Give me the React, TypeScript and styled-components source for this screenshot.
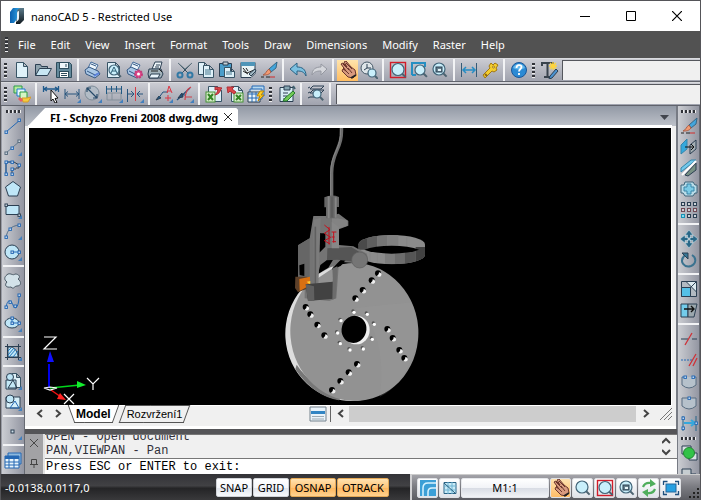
import React from "react";
import styled, { createGlobalStyle, css } from "styled-components";

const GlobalStyle = createGlobalStyle`
  * { box-sizing: border-box; }
  html, body, #root { margin: 0; padding: 0; }
  body { background: #3a3a3c; font-family: "Noto Sans", "Open Sans", sans-serif; font-size: 11px; color: #000; }
  button, input { font: inherit; color: inherit; margin: 0; padding: 0; border: 0; border-radius: 0; background: none; }
  svg { display: block; }
`;

const K = "#2b3f52";
const B = "#2468b4";
const L = "#bfe6f7";
const C = "#35a8dc";

const ln = (d: string, stroke = K, w = 1) => <path d={d} stroke={stroke} strokeWidth={w} fill="none" />;
const fl = (d: string, fill: string, stroke = K, w = 1) => <path d={d} stroke={stroke} strokeWidth={w} fill={fill} />;
const sq = (x: number, y: number, c = B) => <rect key={`${x}-${y}`} x={x - 1} y={y - 1} width="2.4" height="2.4" fill="#e4edf5" stroke={c} strokeWidth="1" />;
const corner = <path d="M18 14v4h-4z" fill="#4380bd" />;
const lens = (x: number, y: number, r: number, c = "#c9effb") => (
  <>
    <path d={`M${x + r * 0.7} ${y + r * 0.7}l3.4 3.4`} stroke="#4d6370" strokeWidth="2" />
    <circle cx={x} cy={y} r={r} fill={c} stroke="#426579" strokeWidth="1.2" />
  </>
);
const page = (x: number, y: number, w: number, h: number) =>
  fl(`M${x} ${y}h${w - 4}l4 4v${h - 4}h${-w}zM${x + w - 4} ${y}v4h4`, "#dff1f9", "#385466");
const printer = (
  <>
    {fl("M4 7l3-6l7 3l-3 6z", "#eef6fc", "#426a9a")}
    {fl("M1 9l4-3l9 4l2 3l-5 4l-9-4z", "#aac8e6", "#345782")}
    {ln("M3 10l8 4l4-2M7 3l5 2", "#345782")}
  </>
);
const hand = (
  <>
    {fl("M2 3l2-1l4 4l-3-5l2-1l5 6l4 3l1 5l-3 3l-5-1l-6-6l1-2l3 2z", "#d89a7f", "#6b352b")}
    {ln("M4 3l6 6M7 2l6 6M4 7l6 6M9 7l4 5", "#6b352b")}
    {ln("M12 17l5-3", "#222", 2)}
  </>
);
const brush = (
  <>
    {fl("M17 1l-1 6l-5 4l-2-3z", "#43a6dd", "#356785")}
    {fl("M9 8l2 3c-2 3-5 3-8 3c3-1 3-4 6-6z", "#f29a72", "#a95e48")}
    {ln("M1 16h3M6 16h4", "#222", 1)}
    {ln("M10 16h5", "#d12d2d", 1)}
  </>
);
const dimH = ln("M2 4v10M16 4v10M2 9h14M5 6.500l-3 2.500l3 2.500M13 6.500l3 2.500l-3 2.500", "#28557d");

const drawings: Record<string, React.ReactNode> = {
  New: page(3.5, 1.5, 11, 15),
  Open: <>{fl("M1.500 14.500v-11h5l1 2h6v3", "#8fa3ae")}{fl("M1.500 14.500l4-7h12l-4 7z", "#c8e6f3")}</>,
  Save: <>{fl("M1.500 1.500h13l2 2v13h-15z", "#63899b", "#2d4c5c")}<rect x="4.500" y="1.500" width="9" height="6" fill="#eef6fa" stroke="#2d4c5c" /><rect x="4.500" y="10.500" width="9" height="6" fill="#fff" stroke="#2d4c5c" />{ln("M6 12.500h6M6 14.500h6M11 3v3", "#2d4c5c")}</>,
  Print: <>{printer}{ln("M10 15l5-3", "#5d83df", 2)}</>,
  Preview: <>{page(2.5, 1.5, 12, 15)}{lens(9, 9, 5)}{ln("M6 12l3-6l3 6M7 10h4", "#2f6076")}</>,
  Plot: <>{printer}<circle cx="12.500" cy="13" r="3.500" fill="#e24a8c" stroke="#c33b78" strokeDasharray="2 1" strokeWidth="2" /><circle cx="12.500" cy="13" r="1.500" fill="#fff" /></>,
  Printer: <>{fl("M5 8l3-7h7l-2 7z", "#eef6fa")}{fl("M2 8h12l2 5l-2 4h-12l-1-4z", "#a4b4bc")}{fl("M4 13h9l-2 4h-9z", "#e9f4fb")}{ln("M9 4h4M8 6h4")}{ln("M12 8l3 3M4 10h7", "#222")}</>,
  Cut: <>{ln("M2 2l11 11M16 2l-11 11", "#344f60", 1)}{ln("M2 2l7 6l7-6", "#687b85", 1)}<circle cx="4" cy="14" r="2.500" fill="none" stroke="#3279a5" strokeWidth="2" /><circle cx="14" cy="14" r="2.500" fill="none" stroke="#3279a5" strokeWidth="2" /></>,
  Copy: <>{page(1.5, 1.5, 10, 12)}{page(6.5, 4.5, 10, 12)}{ln("M8 9h6M8 11h6M8 13h6", "#48788e")}</>,
  Paste: <>{fl("M1.500 2.500h12v13h-12z", "#4a9ecb")}{fl("M5 1h5v3h-5z", "#c6d1d6")}{page(6.5, 6.5, 10, 10)}{ln("M8 11h6M8 13h6", "#48788e")}</>,
  Properties: <>{fl("M2 1.500h14v11l-4 4h-10z", "#e9f3f5")}<path d="M2 1h14v4h-14z" fill="#4f95b8" />{ln("M4 7l4 5l7-3M4 10l5 3M7 7l2 3", "#222")}{fl("M10 13l6-5l1 2l-5 5z", "#a3b9c4")}</>,
  "Match properties": brush,
  Undo: fl("M1 8l7-6v4c5 0 9 2 9 9c-2-4-4-5-9-5v4z", "#7bc0e0", "#2b6385"),
  Redo: fl("M17 8l-6-5v3c-5 0-9 2-9 8c2-3 4-4 9-4v4z", "#d4d6db", "#9598a1"),
  Pan: hand,
  "Zoom realtime": <><circle cx="7" cy="7" r="6" fill="#dee5e9" stroke="#465967" />{ln("M7 3v4h4M7 7l-3 2")}{lens(12, 12, 4)}</>,
  "Zoom all": <><rect x="1.500" y="1.500" width="15" height="15" fill="none" stroke="#d11d2a" strokeWidth="1.400" />{lens(9, 8.5, 6)}</>,
  "Zoom window": <>{ln("M2 14v-12h13v4M2 14h4", "#258fc2", 2)}{lens(10, 9, 5)}</>,
  "Zoom previous": <>{lens(8, 8, 6)}<rect x="5" y="6" width="6" height="5" fill="#66818e" stroke={K} /><path d="M7 8h3v2h-3z" fill="#e8f5fa" /></>,
  Measure: <>{ln("M1.500 2v14M16.500 2v14", "#345b78")}{ln("M3 9h12M6 6l-3 3l3 3M12 6l3 3l-3 3", "#268dc5", 1.5)}</>,
  Key: <>{fl("M2 14l7-7l-1-2l2-3l2 2l2-2l3 2l-2 3l1 2l-3 2l-2-1l-7 7z", "#f3cd2e", "#a27813")}<circle cx="12.500" cy="6" r="1" fill="#fff8bc" stroke="#a27813" />{ln("M4 13l2 2", "#8d6716", 2)}</>,
  Help: <><circle cx="9" cy="9" r="7.500" fill="#2b8ad4" stroke="#195799" /><path d="M3 7a6.500 6.500 0 0 1 12 0c-4 2-8 2-12 0z" fill="#65b9ec" />{ln("M6.500 7c0-4 5-3.500 5-1c0 2-2.500 2-2.500 4.500M9 12v2", "#fff", 1.8)}</>,
  "Text style": <>{ln("M1 5v-3h11v3M6.500 2v14M3 16h7", "#39434d", 2)}{ln("M12 1v8M8 5h8M9 2l6 6M15 2l-6 6", "#ffd53b", 1.4)}{fl("M15 8l2 2l-6 7l-3 1l1-3z", "#4b92d1")}</>,
  Layers: <>{fl("M1 1h8v7h-8z", "#b7ec9a", "#2c9a4a")}{fl("M4 4h8v7h-8z", "#e9f7ff", "#207ad0")}{fl("M7 7h7v7h-7z", "#d5f5c4", "#2e9c3d")}{fl("M9 13h5l4-1l-3 5h-5z", "#f4cc3c", "#d79a2a")}<path d="M5 14l2-2l3 3l-2 2z" fill="#e95d62" /></>,
  "Quick dimension": <>{ln("M1.500 1v6M16.500 1v6M1.500 4h15M5 2l-3 2l3 2M13 2l3 2l-3 2", "#205b8d", 1.3)}{fl("M9 5l7 8l-3 .5l2 4l-2 .5l-2-4l-2 2z", "#fff", "#111")}</>,
  "Linear dimension": <>{dimH}{corner}</>,
  Diameter: <><circle cx="8" cy="8" r="7" fill="#b2bcc6" stroke="#7d8b97" />{ln("M3 3l10 10M3 7V3h4M9 13h4v-4", "#254969", 1.2)}{corner}</>,
  "Chain dimensions": <>{ln("M2 8h14v7h-14zM7 8v7", "#84909b")}{ln("M1.500 1v8M6.500 1v6M11.500 1v6M16.500 1v8M1.500 4h15", "#205983", 1)}{corner}</>,
  "Dimension break": <>{ln("M1.500 4v13M1.500 9h6M17 9h-6M5 6l3 3l-3 3M14 6l-3 3l3 3", "#26547d")}{ln("M9.500 2v14", "#d43e48")}{corner}</>,
  Leader: <>{fl("M1 15l3-4l2 2z", "#29567d")}{ln("M3 14l5-7h5", "#24527c")}{ln("M12 8l2-7l3 7M13 6h3M13 10v6M10 13h6", "#db3644")}{corner}</>,
  "Multi leader": <>{ln("M1 15l13-12M4 10h5", "#24527c", 1.2)}{ln("M9 15c0-7 2-11 6-13M9 12h7", "#d1404b", 1.2)}{fl("M2 13l4-5l1 4z", "#24527c")}{corner}</>,
  "Import table": <>{page(3.5, 1.5, 13, 15)}<rect x="1" y="7" width="9" height="10" fill="#d7eccb" stroke="#479237" />{ln("M3 9l5 6M8 9l-5 6", "#328624", 2)}{fl("M17 3l-7-1v3l3-1c0 3-2 4-3 6c4-1 5-3 6-6z", "#db4649", "#ae3038")}</>,
  "Export table": <>{page(5.5, 1.5, 11, 15)}<rect x="8" y="8" width="9" height="9" fill="#d7eccb" stroke="#479237" />{ln("M10 10l5 5M15 10l-5 5", "#328624", 2)}{fl("M1 2h7l-2 2l4 3l-2 2l-4-3l-2 2z", "#db4649", "#ae3038")}</>,
  "Update table": <>{fl("M5 1h12v10h-12z", "#b6d8ef", B)}{fl("M3 4h12v10h-12z", "#cfdfeb", B)}{fl("M1 7h12v10h-12z", "#eaf5fa")}{ln("M1 9h12M1 13h12M5 7v10M9 7v10", B)}{fl("M13 6h4l-3 4h3l-6 6l2-5h-3z", "#ffcf24", "#b88408")}</>,
  Audit: <>{fl("M2 2.500h13v14h-13z", "#d8eef4")}{fl("M6 1h6v4h-6z", "#87a7b3")}{ln("M5 8h5M5 11h4M5 14h3")}{fl("M7 13l8-7l2 2l-8 8h-4z", "#71c956", "#267a2e")}{ln("M15 1l2 3", "#3f5f6d", 2)}</>,
  "Find layer": <>{ln("M3 4l3-3h11l-3 3zM3 8l3-3h11l-3 3zM3 12h11M1 3l2-1M1 8l2-1M1 13l2-1", K)}{lens(10, 9, 4)}</>,
  Line: <>{ln("M2 15L16 3", B)}{sq(2, 15)}{sq(15, 3)}</>,
  Ray: <>{ln("M2 15L16 3", "#657d91")}{sq(2, 15, "#526779")}{sq(8, 10)}{sq(15, 3, "#526779")}{corner}</>,
  Polyline: <>{ln("M2 15V3h8M8 15v-5h4M10 3l5 3v3h-3", K)}{ln("M2 15V3h6", B, 1)}{sq(2, 3)}{sq(2, 15)}{sq(8, 3)}{sq(8, 15)}{sq(8, 10)}{sq(15, 6)}</>,
  Polygon: fl("M9 1.500l7.500 5.500l-3 9h-9l-3-9z", L),
  Rectangle: <>{fl("M2 4.500h13v9h-13z", L)}{sq(2, 4, K)}{sq(15, 14, K)}{corner}</>,
  Arc: <>{ln("M2 16C3 8 7 4 15 3", "#55708b")}{sq(2, 15)}{sq(6, 7)}{sq(15, 3)}{corner}</>,
  Circle: <><circle cx="8" cy="9" r="7" fill={L} stroke={K} />{ln("M8 9h8", B)}{sq(8, 9)}{sq(15, 9)}{corner}</>,
  "Revision cloud": fl("M4 2c3-1 5 2 7 0c4 0 6 3 3 5c4 3 3 7-1 7c-3 0-3 4-6 1c-5 1-7-2-4-5c-4-3-2-6 1-8z", "#d3e2e9", "#4b5a66"),
  Spline: <>{ln("M2 15c1-9 5-9 7-3s6 2 6-9", B)}{sq(2, 14)}{sq(6, 9)}{sq(11, 13)}{sq(15, 2)}</>,
  Ellipse: <><ellipse cx="8" cy="9" rx="7" ry="5" fill={L} stroke={K} />{ln("M8 4v5h7", B)}{sq(8, 4)}{sq(8, 9)}{sq(15, 9)}{corner}</>,
  Hatch: <>{ln("M1 3.500h16M3.500 1v16M14.500 1v16M1 14.500h16")}{fl("M4 14v-10h3c4 1 7 5 7 10z", L)}{ln("M4 8l3-3M4 12l6-7M5 14l7-8M9 14l5-6", "#2478bd")}{corner}</>,
  "Make block": <>{page(7.5, 1.5, 9, 14)}{fl("M2 8h10v9h-10z", "#c3e8f6")}<circle cx="6" cy="5" r="3.500" fill={L} stroke={K} />{ln("M4 16l5-8l4 8z")}{corner}</>,
  "Insert block": <>{fl("M2 4h14v11h-14z", "#d6eff9")}<circle cx="6" cy="6" r="4" fill={L} stroke={K} />{ln("M6 15l5-7l4 7z", B)}{corner}</>,
  Point: <><rect x="7" y="8" width="3" height="3" fill="#cfe0ea" stroke={K} />{corner}</>,
  Table: <>{fl("M4 2h13v11h-13z", "#8bb8de", B)}{fl("M1 5h14v12h-14z", "#eaf6fc", B)}<path d="M1 5h14v3h-14z" fill={B} />{ln("M1 11h14M1 14h14M5 8v9M10 8v9", B)}</>,
  Erase: brush,
  Mirror: <>{fl("M1 7l6-6v10l-6 5z", C, "#3585ab")}{fl("M16 2l-6 5v9l6-5z", "#a4aeb3")}{ln("M5 9h9M11 6l3 3l-3 3", "#111")}</>,
  Offset: <>{fl("M1 13V9l10-8h5z", "#73c9eb", "#3585ab")}{fl("M5 16l11-12v7l-8 6z", "#779083")}{ln("M2 16L16 2", "#fff", 2)}</>,
  Outline: <>{fl("M1 5h3l1-3h8l2 3h2v8h-2l-2 3H5l-2-3H1z", "#b9dce8", "#3e657a")}{fl("M4 7h3V4h4v3h3v4h-3v3H7v-3H4z", "#7ccbe6", "#3a86a8")}</>,
  Array: <>{[2, 8, 14].map(y => [2, 8, 14].map(x => <rect key={`${x}-${y}`} x={x - 0.5} y={y - 0.5} width="3" height="3" fill={x === 2 && y === 14 ? "#86dcef" : "#cdd2d7"} stroke={x === 2 && y === 14 ? "#1992b5" : y === 8 ? "#714a55" : K} />))}</>,
  Move: <path d="M9 0l4 5h-2.500v3h-3v-3H5zM9 18l4-5h-2.500v-3h-3v3H5zM0 9l5-4v2.500h3v3H5V13zM18 9l-5-4v2.500h-3v3h3V13z" fill="#286787" stroke="#c8e5ef" strokeWidth=".5" />,
  Rotate: <>{ln("M5 4c-7 7 0 13 6 11c5-2 6-8 1-11", "#3a728f", 2)}{fl("M2 2h6v6z", "#387796")}</>,
  Scale: <>{fl("M1.500 1.500h15v15h-15z", "#b2bac2")}{fl("M6 1.500h10.500V12z", "#dceaf0")}{fl("M1.500 7.500h9v9h-9z", "#54c0e7")}{ln("M10 8l6-6")}</>,
  Stretch: <>{fl("M1 3h7v13H1z", "#73cceb")}{fl("M8 3h9l-3 13H8z", "#9ba7ad")}{ln("M4 8h10M11 5l3 3l-3 3", "#111", 1.4)}</>,
  Trim: <>{ln("M1 9h7M12 9h5")}{ln("M5 15l7-12", "#cf3137", 1.3)}</>,
  Extend: <><path d="M1 9h12" stroke={B} strokeDasharray="2 1" />{ln("M9 15l7-12M13 15l4-8", "#cf3137", 1.3)}</>,
  Join: <>{fl("M2 5v8q7 6 14 0V5", "#b6c1cb", "#586d81")}{ln("M2 5h4M12 5h4", B)}{sq(5, 5)}{sq(13, 5)}</>,
  "Break at point": <>{fl("M2 5v8q7 6 14 0V5z", "#b6c1cb", "#586d81")}{sq(9, 5)}</>,
  Align: <>{ln("M3 2v15M16 2v15", "#27658a")}{ln("M4 9h10M11 6l4 3l-4 3", C, 2)}{sq(3, 4)}{sq(3, 14)}{sq(16, 9)}</>,
  "Draw order": <>{fl("M2 2h9v8h-9z", "#d9e0e4")}{fl("M9 9h8v7h-8z", "#d9e0e4")}<circle cx="9" cy="9" r="5.500" fill="#32c348" stroke="#238533" /></>,
  "Send back": <>{fl("M2 4h9v8h-9z", "#c6cdd1")}{fl("M11 9h5v7h-9v-4", "#c6cdd1")}</>,
  "Model space": <><path d="M1 1h16v16H1z" fill="#3c9fd6" />{ln("M4 17V9q0-5 5-5h8M9 17v-4q0-4 4-4h4", "#d8f4ff", 1.5)}</>,
  "Grid display": <>{fl("M3 3.500h12v11H3z", "#c9ebf7", "#2a6385")}{ln("M3 7h12M3 11h12M7 3v12M11 3v12", "#6fb3d2")}{ln("M3 4l11 10", "#245d7d", 1)}</>,
  "Zoom in": lens(8, 8, 6),
  Regenerate: <>{ln("M3 8q2-5 8-4M15 10q-2 5-8 4", "#4fae5c", 2.2)}<path d="M10 0l6 5l-6 3zM8 18l-6-5l6-3z" fill="#4fae5c" /></>,
  "Full screen": <><rect x="4" y="5" width="10" height="8" fill="#27a0e1" stroke="#23669b" />{ln("M1.500 6V2.500h4M13 2.500h3.500V6M16.500 12v3.500H13M5 15.500H1.500V12", "#1e4f7d", 1.3)}</>,
};

const IconButton = styled.button<{ $on?: boolean }>`
  flex: none;
  display: grid;
  place-items: center;
  width: 21px;
  height: 21px;
  ${p => p.$on && css`background: linear-gradient(#ffe4ac, #ffbd62);`}
`;
const Tool = ({ name, on }: { name: string; on?: boolean }) => (
  <IconButton type="button" aria-label={name} $on={on}>
    <svg width="18" height="18" viewBox="0 0 18 18" aria-hidden="true">{drawings[name]}</svg>
  </IconButton>
);

const Window = styled.div`
  min-height: 100vh;
  display: flex;
  flex-direction: column;
  border: 1px solid #555559;
  border-bottom: 0;
  background: #777b84;
`;
const TitleBar = styled.header`
  display: flex;
  align-items: center;
  height: 30px;
  padding-left: 8px;
  background: #fff;
  h1 { flex: 1; margin: 0 0 0 6px; font: 11px "Noto Sans", sans-serif; }
`;
const CaptionButton = styled.button`
  width: 46px;
  height: 30px;
  display: grid;
  place-items: center;
`;
const MenuBar = styled.nav`
  display: flex;
  align-items: center;
  height: 27px;
  gap: 15px;
  padding-left: 4px;
  background: #525252;
  color: #fff;
`;
const Grip = styled.span<{ $flat?: boolean }>`
  flex: none;
  align-self: center;
  width: ${p => (p.$flat ? "15px" : "3px")};
  height: ${p => (p.$flat ? "3px" : "15px")};
  margin: ${p => (p.$flat ? "4px 0 2px" : "0 4px 0 3px")};
  background: repeating-linear-gradient(${p => (p.$flat ? "90deg" : "180deg")}, #303238 0 2px, #eee 2px 3px, transparent 3px 4px);
`;
const MenuGrip = styled(Grip)` margin: 0 -5px 0 0; `;
const ToolRow = styled.div`
  display: flex;
  align-items: center;
  height: 24px;
  border-top: 1px solid #d9dade;
  border-bottom: 1px solid #60636c;
  background: linear-gradient(#cbccd3, #a0a3ae);
`;
const Divider = styled.span<{ $flat?: boolean }>`
  flex: none;
  width: ${p => (p.$flat ? "21px" : "2px")};
  height: ${p => (p.$flat ? "2px" : "22px")};
  margin: ${p => (p.$flat ? "3px 0" : "0 3px")};
  background: #f2f3f5;
`;
const Field = styled.input`
  flex: 1;
  min-width: 0;
  height: 20px;
  margin-left: 2px;
  border-top: 1px solid #55575d;
  border-left: 1px solid #55575d;
  background: #f0f0f0;
  outline: 0;
`;
const Body = styled.main`
  flex: 1;
  min-height: 368px;
  display: flex;
  background: #777b84;
`;
const SideBar = styled.aside<{ $right?: boolean }>`
  flex: none;
  width: ${p => (p.$right ? "23px" : "24px")};
  display: flex;
  flex-direction: column;
  align-items: center;
  height: 368px;
  overflow: hidden;
  background: linear-gradient(90deg, #cbcdd2, #9396a2);
  border-right: 1px solid #666a73;
  border-left: 1px solid ${p => (p.$right ? "#777b84" : "#999ca5")};
`;
const Workspace = styled.section`
  flex: 1;
  min-width: 0;
  display: flex;
  flex-direction: column;
`;
const DocumentPane = styled.div`
  flex: 1;
  display: flex;
  flex-direction: column;
  background: #f0f0f0;
  margin-right: 1px;
`;
const DocumentTabs = styled.div`
  display: flex;
  justify-content: space-between;
  align-items: flex-end;
  height: 20px;
  padding-left: 3px;
  background: linear-gradient(#9299a5, #bdc1c9);
`;
const DocumentTab = styled.div`
  display: flex;
  align-items: center;
  gap: 4px;
  height: 18px;
  padding: 0 4px 0 22px;
  background: #fff;
  clip-path: polygon(17px 0, calc(100% - 2px) 0, 100% 2px, 100% 100%, 0 100%);
  font-weight: 700;
  white-space: nowrap;
`;
const GlyphButton = styled.button<{ $w?: number }>`
  flex: none;
  display: grid;
  place-items: center;
  width: ${p => p.$w ?? 12}px;
  height: 18px;
`;
const Viewport = styled.div`
  flex: 1;
  display: grid;
  margin: 0 5px 0 4px;
  border-top: 2px solid #fff;
  background: #000;
  outline: 1px solid #fff;
  overflow: hidden;
  > svg { grid-area: 1 / 1; }
`;
const Scene = styled.svg` width: 100%; height: 100%; min-height: 277px; `;
const Axes = styled.svg` align-self: end; justify-self: start; `;
const LayoutBar = styled.div`
  position: relative;
  display: flex;
  align-items: center;
  height: 24px;
  padding: 0 4px 4px 6px;
  border-bottom: 3px solid #fff;
`;
const LayoutTab = styled.button<{ $active?: boolean }>`
  position: relative;
  isolation: isolate;
  height: 18px;
  padding: 0 9px;
  margin-right: -2px;
  font: ${p => (p.$active ? "700 12px" : "11px")} "Liberation Sans", sans-serif;
  &::before, &::after {
    content: "";
    position: absolute;
    z-index: -1;
    inset: 0 50% 0 4px;
    border: solid #555;
    border-width: ${p => (p.$active ? "0 0 1px 1px" : "1px 0 1px 1px")};
    background: ${p => (p.$active ? "#fff" : "#f0f0f0")};
    transform: skewX(${p => (p.$active ? "20deg" : "-20deg")});
  }
  &::after {
    inset: 0 4px 0 40%;
    border-width: ${p => (p.$active ? "0 1px 1px 0" : "1px 1px 1px 0")};
    transform: skewX(-20deg);
  }
`;
const Spacer = styled.span` flex: 1; `;
const ScrollTrack = styled.div`
  flex: 0 1 287px;
  height: 16px;
  background: #cdcdcd;
`;
const ScrollArea = styled.div`
  flex: 0 1 341px;
  min-width: 0;
  display: flex;
  align-items: center;
  gap: 1px;
  padding-left: 3px;
`;
const CommandPanel = styled.section`
  display: grid;
  grid-template-columns: 18px 1fr;
  height: 45px;
  border-top: 5px solid #555558;
  background: #a2a2a5;
  font: 12px/14px "Liberation Mono", monospace;
`;
const CommandControls = styled.div`
  display: flex;
  flex-direction: column;
  align-items: center;
  gap: 2px;
`;
const CommandText = styled.div`
  min-width: 0;
  display: flex;
  flex-direction: column;
  background: #f0f0f0;
  border-left: 2px solid #e3e3e3;
`;
const History = styled.div`
  display: flex;
  justify-content: space-between;
  height: 24px;
  overflow: hidden;
  border-top: 1px solid #777;
`;
const Log = styled.div`
  display: flex;
  flex-direction: column;
  justify-content: flex-end;
  padding-left: 1px;
  color: #30303a;
`;
const ScrollStack = styled.div`
  display: flex;
  flex-direction: column;
  justify-content: center;
  gap: 2px;
  padding-right: 6px;
`;
const CommandInput = styled.input`
  width: 100%;
  height: 16px;
  padding-left: 1px;
  border-top: 1px solid #777;
  background: #fff;
  outline: 0;
`;
const StatusBar = styled.footer`
  display: flex;
  align-items: center;
  height: 26px;
  background: linear-gradient(#333337, #414144 45%, #242426 55%, #39393b);
`;
const Coordinates = styled.output`
  flex: 0 1 215px;
  padding-left: 4px;
  color: #fff;
`;
const Modes = styled.div`
  display: flex;
  gap: 1px;
`;
const ModeButton = styled.button<{ $on?: boolean; $w: number }>`
  width: ${p => p.$w}px;
  height: 19px;
  border: 1px solid ${p => (p.$on ? "#e4a855" : "#d0d3d8")};
  border-radius: 2px;
  background: ${p => (p.$on ? "linear-gradient(#ffe2b0, #ffc579 50%, #ffb55b 51%, #ffd390)" : "linear-gradient(#fff, #f5f7fb 50%, #dfe4ec 51%, #f7f9fc)")};
`;
const StatusTray = styled.div`
  flex: 0 0 290px;
  display: flex;
  align-items: center;
  gap: 1px;
  height: 26px;
  padding-left: 5px;
  margin-left: auto;
  border-left: 2px solid #d1d1d3;
  border-top: 1px solid #ccc;
  background: linear-gradient(#a4a4aa, #7c7d83 45%, #5b5c62);
  ${IconButton} {
    height: 20px;
    border: 1px solid #dfe1e5;
    border-radius: 2px;
    background: linear-gradient(#fff, #dfe3e9);
  }
  ${IconButton}:nth-of-type(4) { background: linear-gradient(#ffe2b0, #ffbd67); }
`;
const ScaleButton = styled.button`
  flex: 1;
  height: 20px;
  border: 1px solid #e5e7eb;
  border-radius: 2px;
  background: linear-gradient(#fff, #f1f3f7 50%, #d8dce4 51%, #f1f3f6);
`;
const SizeGrip = styled.svg` flex: none; align-self: end; margin: 0 0 1px 6px; `;

const Chevron = ({ dir }: { dir: "left" | "right" | "up" | "down" }) => {
  const d = { left: "M6 1L2 4.500L6 8", right: "M2 1L6 4.500L2 8", up: "M0 6L4 2L8 6", down: "M0 2L4 6L8 2" }[dir];
  return <svg width="9" height="9" viewBox="0 0 9 9" aria-hidden="true">{ln(d, "#444", 2)}</svg>;
};
const Cross = ({ size = 9, color = "#222" }: { size?: number; color?: string }) => (
  <svg width={size} height={size} viewBox="0 0 10 10" aria-hidden="true">{ln("M0 0L10 10M10 0L0 10", color, 1.2)}</svg>
);

const renderTools = (items: string[], flat = false) =>
  items.map((n, i) => (n === "|" ? <Divider key={i} $flat={flat} /> : n === ":" ? <Grip key={i} $flat={flat} /> : <Tool key={i} name={n} on={n === "Pan"} />));

const menus = ["File", "Edit", "View", "Insert", "Format", "Tools", "Draw", "Dimensions", "Modify", "Raster", "Help"];
const standard = ["New", "Open", "Save", "|", "Print", "Preview", "Plot", "Printer", "|", "Cut", "Copy", "Paste", "Properties", "Match properties", "|", "Undo", "Redo", "|", "Pan", "Zoom realtime", "|", "Zoom all", "Zoom window", "Zoom previous", "|", "Measure", "Key", "|", "Help"];
const dimension = ["Layers", "|", "Quick dimension", "Linear dimension", "Diameter", "Chain dimensions", "Dimension break", "|", "Leader", "Multi leader", "|", "Import table", "Export table", "Update table"];
const drawTools = ["Line", "Ray", "Polyline", "Polygon", "Rectangle", "Arc", "Circle", "|", "Revision cloud", "Spline", "Ellipse", "|", "Hatch", "|", "Make block", "Insert block", "|", "Point", "|", "Table"];
const modifyTools = ["Erase", "Mirror", "Offset", "Outline", "Array", "|", "Move", "Rotate", "|", "Scale", "Stretch", "|", "Trim", "Extend", "Join", "Break at point", "Align", ":", "Draw order", "Send back"];

const boltHoles = [[108, 172], [122, 194], [143, 225], [164, 257], [325, 71], [306, 92], [279, 121], [257, 146], [353, 238], [369, 265], [389, 301], [404, 325], [262, 343], [237, 368], [212, 394], [187, 421]];
const hubHoles = [[251, 186], [291, 192], [312, 222], [306, 267], [279, 296], [239, 299], [210, 280], [202, 248], [212, 211]];

const BrakeModel = () => (
  <Scene viewBox="0 0 642 277" role="img" aria-label="Brake disc assembly">
    <defs><clipPath id="ring"><path d="M265 358A100 28 0 0 1 465 358V390A100 28 0 0 1 265 390Z" /></clipPath></defs>
    <g transform="translate(241 -3) scale(.333333)">
      <path d="M214 0C220 75 185 75 185 145V218" fill="none" stroke="#6c6c6c" strokeWidth="10" />
      <path d="M211 10C216 75 182 80 182 145V218" fill="none" stroke="#868686" strokeWidth="3" />
      <g clipPath="url(#ring)">
        <path d="M260 325H470V422H260Z" fill="#8b8b8b" />
        <path d="M260 325H293V374H260Z" fill="#4a4a4a" />
        <path d="M293 325H322V374H293Z" fill="#5e5e5e" />
        <path d="M322 325H352V374H322Z" fill="#757575" />
        <path d="M352 325H385V374H352Z" fill="#808080" />
        <path d="M345 380H375V422H345Z" fill="#7c7c7c" />
        <path d="M375 376H405V422H375Z" fill="#6d6d6d" />
        <path d="M405 372H437V422H405Z" fill="#555" />
        <path d="M437 366H470V422H437Z" fill="#424242" />
        <path d="M410 325V370M300 378V420M322 380V420" stroke="#7c7c7c" />
      </g>
      <path d="M283 374A100 28 0 0 1 447 374A100 28 0 0 1 283 374Z" fill="#000" />
      <g transform="translate(0 375)">
        <ellipse cx="244" cy="250" rx="198" ry="203" transform="rotate(8 244 250)" fill="#ddd" />
        <path d="M76 358Q130 438 206 451L220 440Q126 414 80 344Z" fill="#777" />
        <ellipse cx="253" cy="246" rx="192" ry="207" transform="rotate(-5 253 246)" fill="#929292" />
        <path d="M256 174Q352 242 330 440Q413 400 444 260Q450 220 425 157Z" fill="#9d9d9d" opacity=".25" />
        <ellipse cx="259" cy="240" rx="40" ry="43" fill="#eee" />
        <ellipse cx="252" cy="238" rx="37" ry="41" transform="rotate(15 252 238)" fill="#000" />
        {boltHoles.map(([x, y]) => <g key={`${x}-${y}`}><circle cx={x - 1} cy={y - 1} r="9" fill="#000" /><path d={`M${x + 2} ${y - 4}q11 3 6 11q-6 5-12 0q7-3 6-11z`} fill="#eee" /></g>)}
        {hubHoles.map(([x, y]) => <g key={`${x}-${y}`}><circle cx={x - 2} cy={y - 3} r="5" fill="#555" /><circle cx={x + 1} cy={y + 1} r="5" fill="#fff" /></g>)}
      </g>
      <path d="M84 361L119 340L130 273H178L206 266L235 288V302L207 313V360L250 364L291 386L293 407L268 425L244 413L207 410L199 520L178 528L104 520V450L84 485Z" fill="#747474" />
      <path d="M84 361L119 340V486L84 475Z" fill="#666" />
      <path d="M88 421L103 416V453L89 450ZM153 325H166V365L148 383V323ZM151 420L174 403H190L175 428Q151 442 144 448ZM202 415L219 398H233L212 423L184 434Z" fill="#000" />
      <path d="M144 452L186 425L190 470L138 478Z" fill="#929292" />
      <path d="M136 452L178 428L190 424L186 431L140 462Z" fill="#ddd" />
      <path d="M130 285L152 278L145 488L132 493Z" fill="#7c7c7c" />
      <path d="M136 305V481" stroke="#606060" strokeWidth="5" />
      <path d="M186 277L232 286V302L202 312L186 307Z" fill="#838383" />
      <path d="M172 370L244 366L277 386L259 411L202 404L171 406Z" fill="#555" />
      <circle cx="269" cy="405" r="24" fill="#757575" stroke="#5e5e5e" strokeWidth="2" />
      <path d="M163 217Q185 207 207 216V246H200V280H168V247H163Z" fill="#666" />
      <path d="M176 214V280M197 217V278" stroke="#858585" strokeWidth="6" />
      <path d="M186 217V277" stroke="#555" strokeWidth="3" />
      <path d="M185 290V370H207V307Z" fill="#878787" />
      <path d="M163 300L180 314L163 325L182 337L163 347L180 357M185 321H199M185 336H194M187 350H198M191 321V353M177 306V358" fill="none" stroke="#c4101c" strokeWidth="3" />
      <path d="M76 455L112 455L119 488L84 502L75 489Z" fill="#5d4029" />
      <path d="M88 462L120 455V481L89 498Z" fill="#d87012" />
      <path d="M110 470L121 468V480Z" fill="#ffcb34" />
      <path d="M107 478L189 470L191 521L114 528Z" fill="#424242" />
      <path d="M107 478L132 484L133 527L114 528Z" fill="#606060" />
      <path d="M189 430L202 424L197 520L187 524Z" fill="#6c6c6c" />
    </g>
  </Scene>
);

export default function App() {
  return (
    <>
      <GlobalStyle />
      <Window>
        <TitleBar>
          <svg width="16" height="18" viewBox="0 0 16 18" aria-hidden="true">
            <defs>
              <linearGradient id="logoBlue"><stop stopColor="#0a5fae" /><stop offset="1" stopColor="#2fa4e4" /></linearGradient>
              <linearGradient id="logoDark" x2="0" y2="1"><stop stopColor="#5b7c8c" /><stop offset="1" stopColor="#10181e" /></linearGradient>
            </defs>
            <path d="M4 1h11v12l-4 4H7V3z" fill="url(#logoDark)" />
            <path d="M4 1h7q-3 1-3 4v7l-3 4H1V5z" fill="url(#logoBlue)" />
            <path d="M8 6q0-2 2-2v7q0 3-4 4q2-1 2-4z" fill="#e6f1f6" />
          </svg>
          <h1>nanoCAD 5 - Restricted Use</h1>
          <CaptionButton type="button" aria-label="Minimize"><svg width="11" height="11">{ln("M0 5.500h10", "#000")}</svg></CaptionButton>
          <CaptionButton type="button" aria-label="Maximize"><svg width="11" height="11">{ln("M.5 .5h9v9h-9z", "#000")}</svg></CaptionButton>
          <CaptionButton type="button" aria-label="Close"><Cross size={10} color="#000" /></CaptionButton>
        </TitleBar>
        <MenuBar>
          <MenuGrip />
          {menus.map(m => <button key={m} type="button">{m}</button>)}
        </MenuBar>
        <ToolRow>
          <Grip />
          {renderTools(standard)}
          <Grip />
          <Tool name="Text style" />
          <Field aria-label="Text style name" />
        </ToolRow>
        <ToolRow>
          <Grip />
          {renderTools(dimension)}
          <Grip />
          {renderTools(["Audit", "|", "Find layer", "|"])}
          <Field aria-label="Layer name" />
        </ToolRow>
        <Body>
          <SideBar aria-label="Draw">
            <Grip $flat />
            {renderTools(drawTools, true)}
          </SideBar>
          <Workspace>
            <DocumentPane>
              <DocumentTabs>
                <DocumentTab>
                  FI - Schyzo Freni 2008 dwg.dwg
                  <GlyphButton type="button" aria-label="Close document"><Cross size={8} /></GlyphButton>
                </DocumentTab>
                <GlyphButton type="button" aria-label="Document list" $w={24}><svg width="9" height="5"><path d="M0 0h9L4.500 5z" fill="#42464e" /></svg></GlyphButton>
              </DocumentTabs>
              <Viewport>
                <BrakeModel />
                <Axes width="80" height="72" viewBox="0 0 80 72" aria-label="Axes">
                  {ln("M15 4h12L15 16h13", "#fff", 1.2)}
                  {ln("M20 55V31", "#0000e8", 2)}<path d="M21 18l4 11h-7z" fill="#1010ff" />
                  {ln("M21 55l30-3", "#00d71c", 1.5)}<path d="M57 52l-9-4v7z" fill="#13ed2d" />
                  {ln("M22 57l10 7", "#e11", 1.5)}<path d="M37 67l-9-1l3-6z" fill="#f22" />
                  {ln("M15 55l6 2l7-2l-7-1z", "#fff", 1.2)}
                  {ln("M58 45l6 6l6-6M64 51v6", "#fff", 1.2)}
                  {ln("M35 61l10 10M45 61L35 71", "#fff", 1.2)}
                </Axes>
              </Viewport>
              <LayoutBar>
                <GlyphButton type="button" aria-label="Previous layout" $w={18}><Chevron dir="left" /></GlyphButton>
                <GlyphButton type="button" aria-label="Next layout" $w={18}><Chevron dir="right" /></GlyphButton>
                <LayoutTab type="button" $active>Model</LayoutTab>
                <LayoutTab type="button">Rozvržení1</LayoutTab>
                <Spacer />
                <GlyphButton type="button" aria-label="Layout list" $w={22}>
                  <svg width="22" height="16" viewBox="0 0 22 16">{fl("M1 1h16v14H1z", "#e9f3fa", "#75828d")}<path d="M2 5h14v3H2z" fill="#3185c4" />{ln("M3 10.500h12M3 13h12", "#9eabb4")}{ln("M21.500 0v16", "#666")}</svg>
                </GlyphButton>
                <ScrollArea>
                  <GlyphButton type="button" aria-label="Scroll left" $w={14}><Chevron dir="left" /></GlyphButton>
                  <ScrollTrack />
                  <GlyphButton type="button" aria-label="Scroll right" $w={18}><Chevron dir="right" /></GlyphButton>
                  <Spacer />
                  <svg width="12" height="14" viewBox="0 0 12 14">{ln("M0 13L12 1M4 13l8-8M8 13l4-4", "#777")}</svg>
                </ScrollArea>
              </LayoutBar>
            </DocumentPane>
            <CommandPanel>
              <CommandControls>
                <GlyphButton type="button" aria-label="Close command line"><Cross size={8} color="#444" /></GlyphButton>
                <GlyphButton type="button" aria-label="Pin command line"><svg width="8" height="10">{ln("M1.500 6V1.500h5V6M0 6.500h8M4 7v3", "#444")}</svg></GlyphButton>
              </CommandControls>
              <CommandText>
                <History>
                  <Log><span>OPEN - Open document</span><span>PAN,VIEWPAN - Pan</span></Log>
                  <ScrollStack><Chevron dir="up" /><Chevron dir="down" /></ScrollStack>
                </History>
                <CommandInput aria-label="Command" defaultValue="Press ESC or ENTER to exit:" />
              </CommandText>
            </CommandPanel>
          </Workspace>
          <SideBar $right aria-label="Modify">
            <Grip $flat />
            {renderTools(modifyTools, true)}
          </SideBar>
        </Body>
        <StatusBar>
          <Coordinates>-0.0138,0.0117,0</Coordinates>
          <Modes>
            <ModeButton type="button" $w={36}>SNAP</ModeButton>
            <ModeButton type="button" $w={36}>GRID</ModeButton>
            <ModeButton type="button" $w={46} $on>OSNAP</ModeButton>
            <ModeButton type="button" $w={52} $on>OTRACK</ModeButton>
          </Modes>
          <StatusTray>
            <Tool name="Model space" />
            <Tool name="Grid display" />
            <ScaleButton type="button">M1:1</ScaleButton>
            <Tool name="Pan" />
            <Tool name="Zoom in" />
            <Tool name="Zoom all" />
            <Tool name="Zoom previous" />
            <Tool name="Regenerate" />
            <Tool name="Full screen" />
            <SizeGrip width="12" height="12" viewBox="0 0 12 12"><path d="M9 1h2v2H9zM5 5h2v2H5zM9 5h2v2H9zM1 9h2v2H1zM5 9h2v2H5zM9 9h2v2H9z" fill="#222" /></SizeGrip>
          </StatusTray>
        </StatusBar>
      </Window>
    </>
  );
}
